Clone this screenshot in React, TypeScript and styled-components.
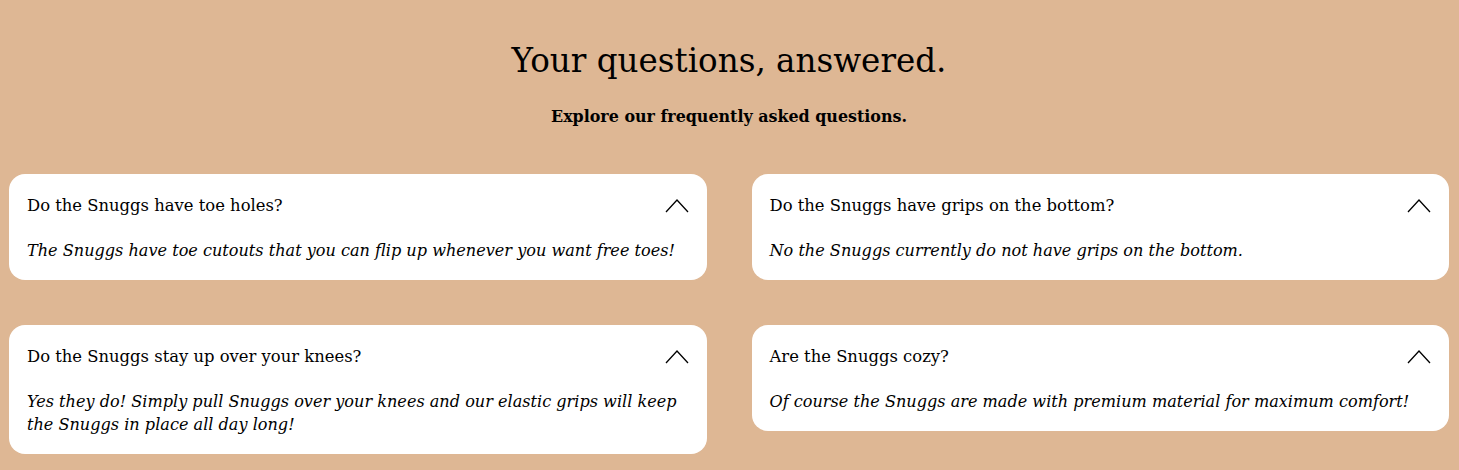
import React from 'react';
import styled, {createGlobalStyle} from 'styled-components';

const GlobalStyle = createGlobalStyle`
  body {
    margin: 0;
    background-color: #deb794;
    font-family: 'DejaVu Serif', 'Liberation Serif', serif;
    color: #000;
  }
`;

const Section = styled.section`
  padding: 38px 10px 18px 9px;
`;

const Title = styled.h2`
  margin: 0;
  text-align: center;
  font-size: 32.6px;
  font-weight: 400;
  line-height: 46px;
`;

const Subtitle = styled.p`
  margin: 21px 0 0;
  text-align: center;
  font-size: 15.9px;
  font-weight: 700;
  line-height: 24px;
`;

const Grid = styled.div`
  margin-top: 45px;
  display: grid;
  grid-template-columns: 1fr 1fr;
  column-gap: 45px;
  row-gap: 45px;
  align-items: start;
`;

const Card = styled.div`
  background-color: #fff;
  border-radius: 16px;
  padding: 20px 18px 18px;
`;

const QuestionRow = styled.div`
  display: flex;
  justify-content: space-between;
  align-items: center;
`;

const Question = styled.span`
  font-size: 16.4px;
  line-height: 23px;
`;

const Answer = styled.p`
  margin: 22px 0 0;
  font-size: 16.1px;
  font-style: italic;
  line-height: 23px;
`;

const Chevron = () => (
  <svg width="24" height="16" viewBox="0 0 24 16" fill="none">
    <path d="M1 14L12 2L23 14" stroke="#000" strokeWidth="1.3" />
  </svg>
);

const faqs = [
  {
    q: 'Do the Snuggs have toe holes?',
    a: 'The Snuggs have toe cutouts that you can flip up whenever you want free toes!',
  },
  {
    q: 'Do the Snuggs have grips on the bottom?',
    a: 'No the Snuggs currently do not have grips on the bottom.',
  },
  {
    q: 'Do the Snuggs stay up over your knees?',
    a: 'Yes they do! Simply pull Snuggs over your knees and our elastic grips will keep the Snuggs in place all day long!',
  },
  {
    q: 'Are the Snuggs cozy?',
    a: 'Of course the Snuggs are made with premium material for maximum comfort!',
  },
];

const App: React.FC = () => {
  return (
    <>
      <GlobalStyle />
      <Section>
        <Title>Your questions, answered.</Title>
        <Subtitle>Explore our frequently asked questions.</Subtitle>
        <Grid>
          {faqs.map(item => (
            <Card key={item.q}>
              <QuestionRow>
                <Question>{item.q}</Question>
                <Chevron />
              </QuestionRow>
              <Answer>{item.a}</Answer>
            </Card>
          ))}
        </Grid>
      </Section>
    </>
  );
};

export default App;
